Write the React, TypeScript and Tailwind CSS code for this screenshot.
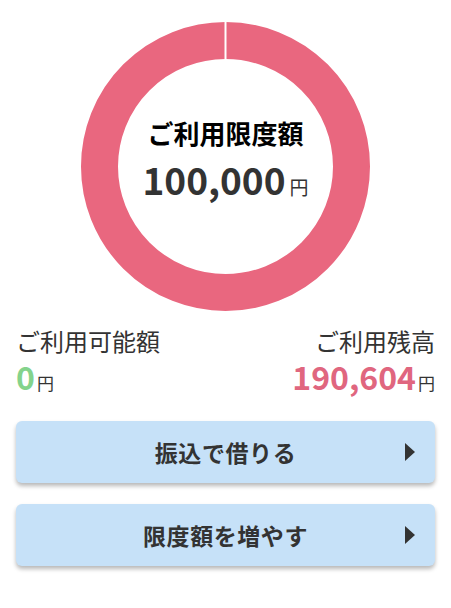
const font = "font-['Noto_Sans_CJK_JP',sans-serif]";

const Arrow = () => (
  <svg width="10" height="18" viewBox="0 0 10 18" className="absolute right-[20px] top-1/2 -translate-y-1/2">
    <path d="M0 0 L10 9 L0 18 Z" fill="#333" />
  </svg>
);

const ActionButton = ({ label }: { label: string }) => (
  <button className="relative flex h-[62px] w-full items-center justify-center rounded-md bg-[#c6e1f8] shadow-[0_3px_4px_rgba(0,0,0,0.28)]">
    <span className="text-[23px] font-bold tracking-wide text-[#333]">{label}</span>
    <Arrow />
  </button>
);

export default function App() {
  return (
    <div className={`${font} min-h-[608px] w-[451px] bg-white px-4`}>
      <div className="flex justify-center pt-[22px]">
        <div className="relative h-[289px] w-[289px]">
          <svg width="289" height="289" viewBox="0 0 289 289">
            <circle cx="144.5" cy="144.5" r="126" fill="none" stroke="#e9677f" strokeWidth="37" />
            <line x1="144.5" y1="0" x2="144.5" y2="40" stroke="#fff" strokeWidth="2" />
          </svg>
          <div className="absolute inset-0 flex flex-col items-center justify-center pb-4">
            <p className="text-[26px] leading-[34px] font-bold text-black">ご利用限度額</p>
            <p className="mt-[8px] flex items-baseline text-[#333]">
              <span className="text-[37px] leading-[42px] font-bold">100,000</span>
              <span className="ml-1 text-[19px]">円</span>
            </p>
          </div>
        </div>
      </div>

      <div className="mt-[16px] flex justify-between">
        <div>
          <p className="text-[24px] leading-[28px] text-[#333]">ご利用可能額</p>
          <p className="mt-[6px] flex items-baseline">
            <span className="text-[32px] leading-[30px] font-bold text-[#84d38c]">0</span>
            <span className="ml-[2px] text-[17px] leading-[20px] text-[#333]">円</span>
          </p>
        </div>
        <div className="flex flex-col items-end">
          <p className="text-[24px] leading-[28px] text-[#333]">ご利用残高</p>
          <p className="mt-[6px] flex items-baseline">
            <span className="text-[32px] leading-[30px] font-bold text-[#e0667f]">190,604</span>
            <span className="ml-[2px] text-[17px] leading-[20px] text-[#333]">円</span>
          </p>
        </div>
      </div>

      <div className="mt-[28px] flex flex-col gap-[21px]">
        <ActionButton label="振込で借りる" />
        <ActionButton label="限度額を増やす" />
      </div>
    </div>
  );
}
